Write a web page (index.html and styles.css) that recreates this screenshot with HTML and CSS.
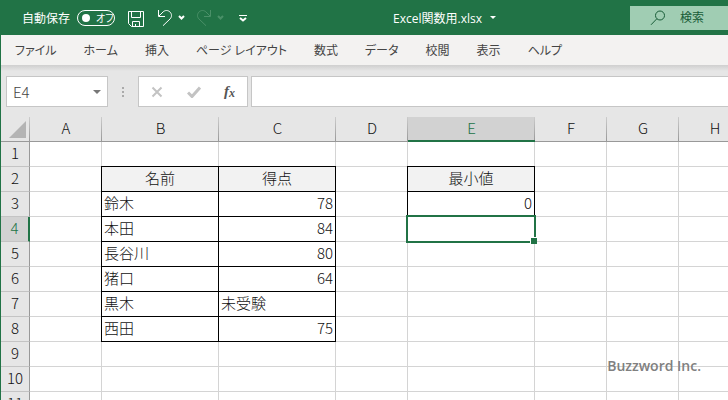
FILE: index.html
```html
<!DOCTYPE html>
<html lang="ja">
<head>
    <meta charset="UTF-8">
    <meta name="viewport" content="width=device-width, initial-scale=1.0">
    <title>Excel関数用.xlsx</title>
    <link rel="stylesheet" href="styles.css">
</head>
<body>
    <header class="titlebar">
        <div class="quick">
            <label class="autosave">自動保存
                <input type="checkbox" class="autosave-input">
                <span class="toggle">オフ</span>
            </label>
            <button class="tool save" aria-label="保存">
                <svg width="18" height="18" viewBox="0 0 18 18"><path d="M1.5 1.5h15v15h-12l-3-3zM4.500 1.500v6h9v-6M5.500 16.500v-5h7v5M8.500 16v-2"/></svg>
            </button>
            <button class="tool undo" aria-label="元に戻す">
                <svg width="28" height="18" viewBox="0 0 28 18"><path d="M1.500 1v6.500h6.500M2 7l4-4c2-2 5-2 7 0s2 5 0 7l-7 6.700"/><path class="thick" d="M22 7l2.500 2.500L27 7"/></svg>
            </button>
            <button class="tool redo" aria-label="やり直し" disabled>
                <svg width="28" height="18" viewBox="0 0 28 18"><path d="M14.500 1v6.500h-6.500M14 7l-4-4c-2-2-5-2-7 0s-2 5 0 7l7 6.700"/><path class="thick" d="M22 7l2.500 2.500L27 7"/></svg>
            </button>
            <button class="tool more" aria-label="カスタマイズ">
                <svg width="8" height="8" viewBox="0 0 8 8"><path d="M0 1.500h8"/><path class="thick" d="M1 4l3 2.500L7 4"/></svg>
            </button>
        </div>
        <button class="filename">Excel関数用.xlsx<span class="caret"></span></button>
        <label class="search">
            <svg width="16" height="16" viewBox="0 0 16 16"><circle cx="10" cy="5.500" r="4.500"/><path d="M6.800 8.800L1 14.800"/></svg>
            <input type="text" placeholder="検索" aria-label="検索">
        </label>
    </header>

    <nav class="ribbon">
        <a href="#">ファイル</a>
        <a href="#">ホーム</a>
        <a href="#">挿入</a>
        <a href="#">ページ レイアウト</a>
        <a href="#">数式</a>
        <a href="#">データ</a>
        <a href="#">校閲</a>
        <a href="#">表示</a>
        <a href="#">ヘルプ</a>
    </nav>

    <div class="formula-bar">
        <div class="name-box">
            <input type="text" value="E4" aria-label="名前ボックス">
            <span class="caret"></span>
        </div>
        <span class="grip"></span>
        <div class="formula-buttons">
            <button aria-label="キャンセル">
                <svg width="12" height="12" viewBox="0 0 12 12"><path d="M1.500 1.500l9 9M10.500 1.500l-9 9"/></svg>
            </button>
            <button aria-label="入力">
                <svg width="14" height="12" viewBox="0 0 14 12"><path class="check" d="M1 6.500l4 4L13 1.500"/></svg>
            </button>
            <button class="fx" aria-label="関数の挿入">f<sub>x</sub></button>
        </div>
        <input type="text" class="formula" aria-label="数式バー">
    </div>

    <main class="sheet">
        <table class="grid">
            <colgroup>
                <col class="w-head">
                <col class="w-std">
                <col class="w-mid">
                <col class="w-mid">
                <col class="w-std">
                <col class="w-wide">
                <col class="w-std">
                <col class="w-std">
                <col class="w-std">
            </colgroup>
            <thead>
                <tr>
                    <th class="corner"></th>
                    <th>A</th><th>B</th><th>C</th><th>D</th><th class="active">E</th><th>F</th><th>G</th><th>H</th>
                </tr>
            </thead>
            <tbody>
                <tr><th>1</th><td></td><td></td><td></td><td></td><td></td><td></td><td></td><td></td></tr>
                <tr><th>2</th><td></td><td class="box title">名前</td><td class="box title">得点</td><td></td><td class="box title">最小値</td><td></td><td></td><td></td></tr>
                <tr><th>3</th><td></td><td class="box">鈴木</td><td class="box num">78</td><td></td><td class="box num">0</td><td></td><td></td><td></td></tr>
                <tr><th class="active">4</th><td></td><td class="box">本田</td><td class="box num">84</td><td></td><td class="selected"></td><td></td><td></td><td></td></tr>
                <tr><th>5</th><td></td><td class="box">長谷川</td><td class="box num">80</td><td></td><td></td><td></td><td></td><td></td></tr>
                <tr><th>6</th><td></td><td class="box">猪口</td><td class="box num">64</td><td></td><td></td><td></td><td></td><td></td></tr>
                <tr><th>7</th><td></td><td class="box">黒木</td><td class="box">未受験</td><td></td><td></td><td></td><td></td><td></td></tr>
                <tr><th>8</th><td></td><td class="box">西田</td><td class="box num">75</td><td></td><td></td><td></td><td></td><td></td></tr>
                <tr><th>9</th><td></td><td></td><td></td><td></td><td></td><td></td><td></td><td></td></tr>
                <tr><th>10</th><td></td><td></td><td></td><td></td><td></td><td></td><td></td><td></td></tr>
                <tr><th>11</th><td></td><td></td><td></td><td></td><td></td><td></td><td></td><td></td></tr>
            </tbody>
        </table>
        <span class="credit">Buzzword Inc.</span>
    </main>
</body>
</html>
```
FILE: styles.css
```css
* {
    box-sizing: border-box;
}

body {
    display: flex;
    flex-direction: column;
    height: 100vh;
    margin: 0;
    overflow: hidden;
    border-left: 1px solid #217346;
    background-color: #fff;
    font-family: "Open Sans", "Noto Sans CJK JP", sans-serif;
    font-size: 12px;
}

button,
input {
    margin: 0;
    padding: 0;
    border: none;
    background: none;
    color: inherit;
    font: inherit;
}

svg {
    display: block;
    fill: none;
    stroke: currentColor;
}

.caret {
    border: 3px solid transparent;
    border-top-color: currentColor;
    border-bottom: none;
}

/* title bar */
.titlebar {
    display: flex;
    align-items: center;
    flex: none;
    height: 35px;
    background-color: #217346;
    color: #fff;
}

.quick {
    display: flex;
    align-items: center;
    padding-left: 21px;
}

.autosave {
    display: flex;
    align-items: center;
    gap: 7px;
    margin-right: 12px;
    white-space: nowrap;
}

.autosave-input {
    position: absolute;
    opacity: 0;
}

.toggle {
    display: flex;
    align-items: center;
    gap: 6px;
    width: 38px;
    height: 16px;
    padding-left: 4px;
    border: 1px solid #fff;
    border-radius: 8px;
    font-size: 10px;
    font-feature-settings: "palt";
}

.toggle::before {
    content: "";
    width: 8px;
    height: 8px;
    border-radius: 50%;
    background-color: #fff;
}

.tool {
    margin-right: 12px;
}

.tool:disabled {
    color: #4a9068;
}

.save {
    margin-top: 2px;
}

.redo {
    margin-left: -1px;
}

.more {
    margin-left: 3px;
}

.thick {
    stroke-width: 2;
}

.filename {
    display: flex;
    align-items: center;
    gap: 8px;
    margin: 0 134px 0 auto;
    white-space: nowrap;
}

.search {
    display: flex;
    align-items: center;
    gap: 14px;
    width: 98px;
    height: 24px;
    padding-left: 20px;
    background-color: #a0cdb3;
    color: #185c37;
}

.search input {
    width: 40px;
}

.search input::placeholder {
    color: #185c37;
}

/* ribbon tabs */
.ribbon {
    display: flex;
    align-items: center;
    flex: none;
    gap: 27px;
    height: 30px;
    padding-left: 14px;
    background-color: #f3f2f1;
    font-feature-settings: "palt";
}

.ribbon a {
    color: #444;
    text-decoration: none;
    white-space: nowrap;
}

/* formula bar */
.formula-bar {
    display: flex;
    flex: none;
    padding: 11px 0 10px 5px;
    background: linear-gradient(#cfcfcf, #e6e6e6 6px);
}

.name-box,
.formula-buttons,
.formula {
    height: 31px;
    border: 1px solid #c6c6c6;
    background-color: #fff;
}

.name-box {
    display: flex;
    align-items: center;
    width: 102px;
    padding: 0 6px;
    color: #444;
    font-family: "Noto Sans CJK JP", sans-serif;
    font-size: 15px;
    font-weight: 300;
}

.name-box input {
    flex: 1;
    min-width: 0;
}

.name-box .caret {
    border-width: 4px;
    border-bottom: none;
    color: #777;
}

.grip {
    align-self: center;
    width: 2px;
    height: 10px;
    margin: 0 14px;
    background: repeating-linear-gradient(#aaa 0 2px, transparent 2px 4px);
}

.formula-buttons {
    display: flex;
    align-items: center;
    justify-content: space-between;
    width: 110px;
    padding: 0 12px;
    color: #c3c3c3;
}

.formula-buttons svg {
    stroke-width: 2;
}

.formula-buttons .check {
    stroke-width: 3;
}

.fx {
    color: #555;
    font: italic bold 15px "Liberation Serif", serif;
}

.fx sub {
    font-size: 12px;
    line-height: 0;
    vertical-align: -1px;
}

.formula {
    flex: 1;
    min-width: 0;
    margin-left: 3px;
    padding: 0 6px;
    border-right: none;
}

/* worksheet */
.sheet {
    position: relative;
    flex: 1;
    min-height: 0;
    overflow: hidden;
}

.grid {
    table-layout: fixed;
    width: 0;
    border-spacing: 0;
    color: #111;
    font-family: "Noto Sans CJK JP", sans-serif;
    font-size: 15px;
    font-weight: 300;
    line-height: 22px;
}

.w-head {
    width: 29px;
}

.w-std {
    width: 72px;
}

.w-mid {
    width: 117px;
}

.w-wide {
    width: 127px;
}

.grid th,
.grid td {
    height: 25px;
    padding: 0 2px 2px;
    border-right: 1px solid #d4d4d4;
    border-bottom: 1px solid #d4d4d4;
    white-space: nowrap;
}

.grid th {
    padding: 0 0 2px;
    background-color: #e6e6e6;
    font-weight: 300;
}

.grid thead th {
    border-right: none;
    border-bottom-color: #999;
    background: linear-gradient(#ccc, #999) right / 1px 100% no-repeat #e6e6e6;
}

.grid tbody th {
    border-right-color: #999;
    border-bottom-color: #c4c4c4;
}

.grid .corner::after {
    content: "";
    display: block;
    width: 17px;
    height: 17px;
    margin: 3px 0 0 8px;
    background-color: #b4b4b4;
    clip-path: polygon(100% 0, 100% 100%, 0 100%);
}

.grid thead .active {
    padding-bottom: 1px;
    border-bottom: 2px solid #217346;
    background-color: #d2d2d2;
    color: #217346;
}

.grid tbody .active {
    border-right: 2px solid #217346;
    background-color: #d2d2d2;
    color: #217346;
}

/* the shadows draw the top and left lines over the neighbouring cells */
.grid .box {
    border-color: #000;
    box-shadow: -1px 0 #000, 0 -1px #000, -1px -1px #000;
}

.grid .title {
    background-color: #f2f2f2;
    text-align: center;
}

.grid .num {
    text-align: right;
}

.grid .selected {
    position: relative;
}

.selected::before {
    content: "";
    position: absolute;
    inset: -2px;
    border: 2px solid #217346;
}

.selected::after {
    content: "";
    position: absolute;
    right: -3px;
    bottom: -3px;
    width: 6px;
    height: 6px;
    border: solid #fff;
    border-width: 1px 0 0 1px;
    background-color: #217346;
}

.credit {
    position: absolute;
    right: 27px;
    bottom: 24px;
    color: #808080;
    font-family: "Open Sans", sans-serif;
    font-size: 14px;
    font-weight: 600;
    line-height: 20px;
}
```
